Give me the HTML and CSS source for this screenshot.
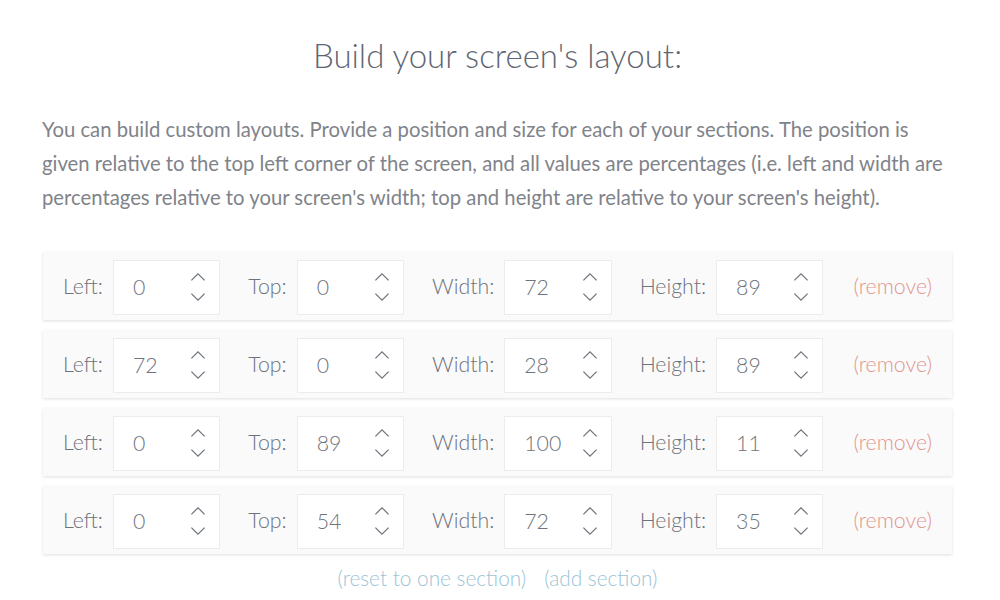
FILE: index.html
```html
<!DOCTYPE html>
<html>
<head>
<meta charset="utf-8">
<link rel="stylesheet" href="styles.css">
</head>
<body>
<main class="page">
  <h1 class="title">Build your screen's layout:</h1>
  <p class="intro">You can build custom layouts. Provide a position and size for each of your sections. The position is given relative to the top left corner of the screen, and all values are percentages (i.e. left and width are percentages relative to your screen's width; top and height are relative to your screen's height).</p>

  <div class="rows">
    <div class="row">
      <span class="label">Left:</span>
      <div class="num num-a"><span>0</span><svg class="spin" viewBox="0 0 20 36"><path d="M3 11 L10 4 L17 11 M3 25 L10 32 L17 25"/></svg></div>
      <span class="label">Top:</span>
      <div class="num"><span>0</span><svg class="spin" viewBox="0 0 20 36"><path d="M3 11 L10 4 L17 11 M3 25 L10 32 L17 25"/></svg></div>
      <span class="label">Width:</span>
      <div class="num"><span>72</span><svg class="spin" viewBox="0 0 20 36"><path d="M3 11 L10 4 L17 11 M3 25 L10 32 L17 25"/></svg></div>
      <span class="label">Height:</span>
      <div class="num"><span>89</span><svg class="spin" viewBox="0 0 20 36"><path d="M3 11 L10 4 L17 11 M3 25 L10 32 L17 25"/></svg></div>
      <a class="remove">(remove)</a>
    </div>
    <div class="row">
      <span class="label">Left:</span>
      <div class="num num-a"><span>72</span><svg class="spin" viewBox="0 0 20 36"><path d="M3 11 L10 4 L17 11 M3 25 L10 32 L17 25"/></svg></div>
      <span class="label">Top:</span>
      <div class="num"><span>0</span><svg class="spin" viewBox="0 0 20 36"><path d="M3 11 L10 4 L17 11 M3 25 L10 32 L17 25"/></svg></div>
      <span class="label">Width:</span>
      <div class="num"><span>28</span><svg class="spin" viewBox="0 0 20 36"><path d="M3 11 L10 4 L17 11 M3 25 L10 32 L17 25"/></svg></div>
      <span class="label">Height:</span>
      <div class="num"><span>89</span><svg class="spin" viewBox="0 0 20 36"><path d="M3 11 L10 4 L17 11 M3 25 L10 32 L17 25"/></svg></div>
      <a class="remove">(remove)</a>
    </div>
    <div class="row">
      <span class="label">Left:</span>
      <div class="num num-a"><span>0</span><svg class="spin" viewBox="0 0 20 36"><path d="M3 11 L10 4 L17 11 M3 25 L10 32 L17 25"/></svg></div>
      <span class="label">Top:</span>
      <div class="num"><span>89</span><svg class="spin" viewBox="0 0 20 36"><path d="M3 11 L10 4 L17 11 M3 25 L10 32 L17 25"/></svg></div>
      <span class="label">Width:</span>
      <div class="num"><span>100</span><svg class="spin" viewBox="0 0 20 36"><path d="M3 11 L10 4 L17 11 M3 25 L10 32 L17 25"/></svg></div>
      <span class="label">Height:</span>
      <div class="num"><span>11</span><svg class="spin" viewBox="0 0 20 36"><path d="M3 11 L10 4 L17 11 M3 25 L10 32 L17 25"/></svg></div>
      <a class="remove">(remove)</a>
    </div>
    <div class="row">
      <span class="label">Left:</span>
      <div class="num num-a"><span>0</span><svg class="spin" viewBox="0 0 20 36"><path d="M3 11 L10 4 L17 11 M3 25 L10 32 L17 25"/></svg></div>
      <span class="label">Top:</span>
      <div class="num"><span>54</span><svg class="spin" viewBox="0 0 20 36"><path d="M3 11 L10 4 L17 11 M3 25 L10 32 L17 25"/></svg></div>
      <span class="label">Width:</span>
      <div class="num"><span>72</span><svg class="spin" viewBox="0 0 20 36"><path d="M3 11 L10 4 L17 11 M3 25 L10 32 L17 25"/></svg></div>
      <span class="label">Height:</span>
      <div class="num"><span>35</span><svg class="spin" viewBox="0 0 20 36"><path d="M3 11 L10 4 L17 11 M3 25 L10 32 L17 25"/></svg></div>
      <a class="remove">(remove)</a>
    </div>
  </div>

  <div class="actions">
    <a class="action">(reset to one section)</a>
    <a class="action">(add section)</a>
  </div>
</main>
</body>
</html>
```

FILE: styles.css
```css
html, body {
  margin: 0;
  padding: 0;
  background: #ffffff;
}

body {
  font-family: Lato, "Open Sans", sans-serif;
  color: #6b7079;
}

.page {
  width: 909px;
  margin: 0 0 0 43px;
  padding-top: 33px;
}

.title {
  margin: 0;
  text-align: center;
  font-weight: 300;
  font-size: 33px;
  line-height: 44px;
  color: #5f6672;
}

.intro {
  margin: 35px -6px 0 -1px;
  font-size: 20.3px;
  line-height: 34px;
  font-weight: 400;
  color: #808389;
}

.rows {
  margin-top: 38px;
  display: flex;
  flex-direction: column;
  gap: 10px;
}

.row {
  display: flex;
  align-items: center;
  height: 68px;
  padding: 0 20px;
  background: #fafafa;
  box-shadow: 0 1px 3px rgba(0, 0, 0, 0.13);
}

.label {
  font-size: 21.3px;
  font-weight: 300;
  color: #6d727b;
  margin-right: 10px;
}

.num {
  display: flex;
  align-items: center;
  justify-content: space-between;
  box-sizing: border-box;
  width: 108px;
  height: 55px;
  margin-right: 28px;
  margin-top: 2px;
  padding: 0 11px 0 19px;
  background: #ffffff;
  border: 1px solid #ececec;
  font-size: 21.3px;
  font-weight: 300;
  color: #6f747d;
}

.spin {
  width: 20px;
  height: 34px;
  fill: none;
  stroke: #6f747d;
  stroke-width: 1.3;
}

.remove {
  margin-left: 2px;
  font-size: 21.3px;
  font-weight: 300;
  color: #e2958e;
}

.actions {
  display: flex;
  justify-content: center;
  gap: 18px;
  margin-top: 12px;
}

.action {
  font-size: 20.8px;
  font-weight: 300;
  color: #9cc4d6;
  line-height: 24px;
}
```
